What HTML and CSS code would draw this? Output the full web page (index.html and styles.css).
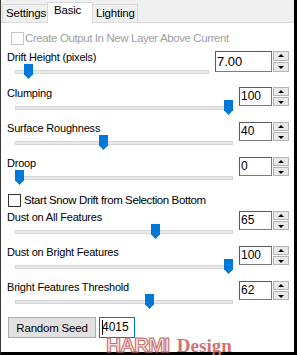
FILE: index.html
```html
<!DOCTYPE html>
<html lang="en">
    <head>
        <meta charset="UTF-8" />
        <title>Snow Drift</title>
        <link rel="stylesheet" href="styles.css">
    </head>
    <body>
        <div class="dialog">
            <div class="tabs">
                <div class="tab">Settings</div>
                <div class="tab active">Basic</div>
                <div class="tab">Lighting</div>
            </div>

            <div class="panel">
                <div class="check disabled"><span class="box"></span>Create Output In New Layer Above Current</div>

                <div class="group first">
                    <div class="left">
                        <div class="label">Drift Height (pixels)</div>
                        <div class="slider short"><div class="track"></div><div class="thumb" style="left:9px"></div></div>
                    </div>
                    <div class="spin"><div class="value wide-value">7.00</div><div class="arrows tall"><span class="up"></span><span class="down"></span></div></div>
                </div>

                <div class="group">
                    <div class="left">
                        <div class="label">Clumping</div>
                        <div class="slider"><div class="track"></div><div class="thumb" style="left:209px"></div></div>
                    </div>
                    <div class="spin"><div class="value">100</div><div class="arrows"><span class="up"></span><span class="down"></span></div></div>
                </div>

                <div class="group">
                    <div class="left">
                        <div class="label">Surface Roughness</div>
                        <div class="slider"><div class="track"></div><div class="thumb" style="left:84px"></div></div>
                    </div>
                    <div class="spin"><div class="value">40</div><div class="arrows"><span class="up"></span><span class="down"></span></div></div>
                </div>

                <div class="group">
                    <div class="left">
                        <div class="label">Droop</div>
                        <div class="slider"><div class="track"></div><div class="thumb" style="left:0px"></div></div>
                    </div>
                    <div class="spin"><div class="value">0</div><div class="arrows"><span class="up"></span><span class="down"></span></div></div>
                </div>

                <div class="check second"><span class="box"></span>Start Snow Drift from Selection Bottom</div>

                <div class="group">
                    <div class="left">
                        <div class="label">Dust on All Features</div>
                        <div class="slider"><div class="track"></div><div class="thumb" style="left:136px"></div></div>
                    </div>
                    <div class="spin"><div class="value">65</div><div class="arrows"><span class="up"></span><span class="down"></span></div></div>
                </div>

                <div class="group">
                    <div class="left">
                        <div class="label">Dust on Bright Features</div>
                        <div class="slider"><div class="track"></div><div class="thumb" style="left:209px"></div></div>
                    </div>
                    <div class="spin"><div class="value">100</div><div class="arrows"><span class="up"></span><span class="down"></span></div></div>
                </div>

                <div class="group">
                    <div class="left">
                        <div class="label">Bright Features Threshold</div>
                        <div class="slider"><div class="track"></div><div class="thumb" style="left:130px"></div></div>
                    </div>
                    <div class="spin"><div class="value">62</div><div class="arrows"><span class="up"></span><span class="down"></span></div></div>
                </div>

                <div class="seed-row">
                    <button class="seed-btn">Random Seed</button>
                    <div class="seed-input"><span class="caret"></span>4015</div>
                </div>

                <div class="watermark"><span class="harmi">HARMI</span><span class="design">Design</span></div>
            </div>
        </div>
    </body>
</html>
```

FILE: styles.css
```css
* {
    margin: 0;
    padding: 0;
    box-sizing: border-box;
}
body {
    font-family: "Liberation Sans", Arial, sans-serif;
    font-size: 11px;
    letter-spacing: -0.2px;
    color: #000;
    background: #fff;
    width: 297px;
    height: 355px;
    overflow: hidden;
}

.dialog {
    width: 297px;
    height: 355px;
    display: flex;
    flex-direction: column;
    background: #f0f0f0;
    border-left: 1px solid #3a3a3a;
    border-right: 3px solid #000;
    border-bottom: 3px solid #000;
}

/* tabs */
.tabs {
    height: 22px;
    display: flex;
    align-items: flex-end;
    padding-left: 1px;
    position: relative;
    z-index: 1;
}
.tab {
    height: 18px;
    width: 46px;
    padding-left: 3px;
    line-height: 17px;
    font-size: 11.5px;
    background: #f0f0f0;
    border: 1px solid #d9d9d9;
    border-bottom: none;
    margin-right: -1px;
}
.tab.active {
    height: 21px;
    margin-bottom: -1px;
    background: #fff;
    padding-left: 6px;
    line-height: 15px;
    position: relative;
}

/* panel */
.panel {
    flex: 1;
    background: #fff;
    border-top: 1px solid #d9d9d9;
    padding: 8px 5px 0 6px;
    position: relative;
}

.check {
    display: flex;
    align-items: center;
    height: 15px;
    line-height: 15px;
    font-size: 11.5px;
    letter-spacing: -0.4px;
}
.check .box {
    width: 13px;
    height: 13px;
    border: 1px solid #333;
    background: #fff;
    margin-right: 3px;
}
.check.disabled {
    color: #a0a0a0;
    padding-left: 4px;
}
.check.disabled .box {
    border-color: #c6c6c6;
    margin-right: 1px;
}
.check.second {
    margin-top: 1px;
    margin-left: 1px;
    height: 16px;
    margin-bottom: 2px;
}

.group {
    display: flex;
    align-items: flex-start;
    height: 35px;
}
.group.first {
    margin-top: 4px;
    height: 36px;
}
.left {
    flex: 1;
}
.label {
    height: 15px;
    line-height: 15px;
}

.slider {
    position: relative;
    margin-left: 8px;
    width: 218px;
    height: 20px;
}
.slider.short {
    width: 194px;
}
.track {
    position: absolute;
    left: 0;
    right: 0;
    top: 5px;
    height: 4px;
    background: #e7eaea;
    border: 1px solid #d6d6d6;
}
.thumb {
    position: absolute;
    top: -1px;
    width: 9px;
    height: 15px;
    background: #0078d7;
    clip-path: polygon(0 0, 100% 0, 100% 68%, 50% 100%, 0 68%);
}

/* spin box */
.spin {
    flex: none;
    display: flex;
    gap: 1px;
    margin-top: 1px;
}
.value {
    flex: none;
    width: 33px;
    height: 19px;
    border: 1px solid #7a7a7a;
    border-top-color: #5a5a5a;
    border-left-color: #5a5a5a;
    padding-left: 1px;
    line-height: 17px;
    font-size: 12px;
    letter-spacing: 0;
    background: #fff;
}
.value.wide-value {
    width: 57px;
    height: 21px;
    line-height: 19px;
    font-size: 13px;
}
.arrows {
    flex: none;
    width: 16px;
    height: 19px;
    display: flex;
    flex-direction: column;
    gap: 1px;
}
.arrows.tall {
    height: 21px;
}
.arrows span {
    flex: 1;
    background: #e9e9e9;
    border: 1px solid #b4b4b4;
    position: relative;
}
.arrows span::after {
    content: "";
    position: absolute;
    left: 50%;
    top: 50%;
    margin-left: -3px;
    border-left: 3px solid transparent;
    border-right: 3px solid transparent;
}
.arrows .up::after {
    margin-top: -2px;
    border-bottom: 3px solid #000;
}
.arrows .down::after {
    margin-top: -1px;
    border-top: 3px solid #000;
}

/* seed */
.seed-row {
    display: flex;
    gap: 3px;
    margin-top: 2px;
    margin-left: 1px;
}
.seed-btn {
    width: 88px;
    height: 21px;
    font-family: inherit;
    font-size: 11.5px;
    letter-spacing: -0.2px;
    background: #e1e1e1;
    border: 1px solid #adadad;
}
.seed-input {
    width: 36px;
    height: 21px;
    border: 1px solid #0078d7;
    line-height: 19px;
    font-size: 12px;
    letter-spacing: 0;
    padding-left: 2px;
    position: relative;
}
.caret {
    position: absolute;
    left: 2px;
    top: 2px;
    width: 1px;
    height: 15px;
    background: #000;
}

.watermark {
    position: absolute;
    left: 105px;
    bottom: -5px;
    display: flex;
    align-items: baseline;
    gap: 8px;
    letter-spacing: 0;
}
.harmi {
    font-family: "Liberation Sans", sans-serif;
    font-weight: bold;
    font-size: 21px;
    color: #f7dede;
    -webkit-text-stroke: 1px #c86a6a;
    letter-spacing: -1.2px;
}
.design {
    font-family: "Liberation Serif", serif;
    font-weight: bold;
    font-size: 19px;
    color: #d27272;
}
```
